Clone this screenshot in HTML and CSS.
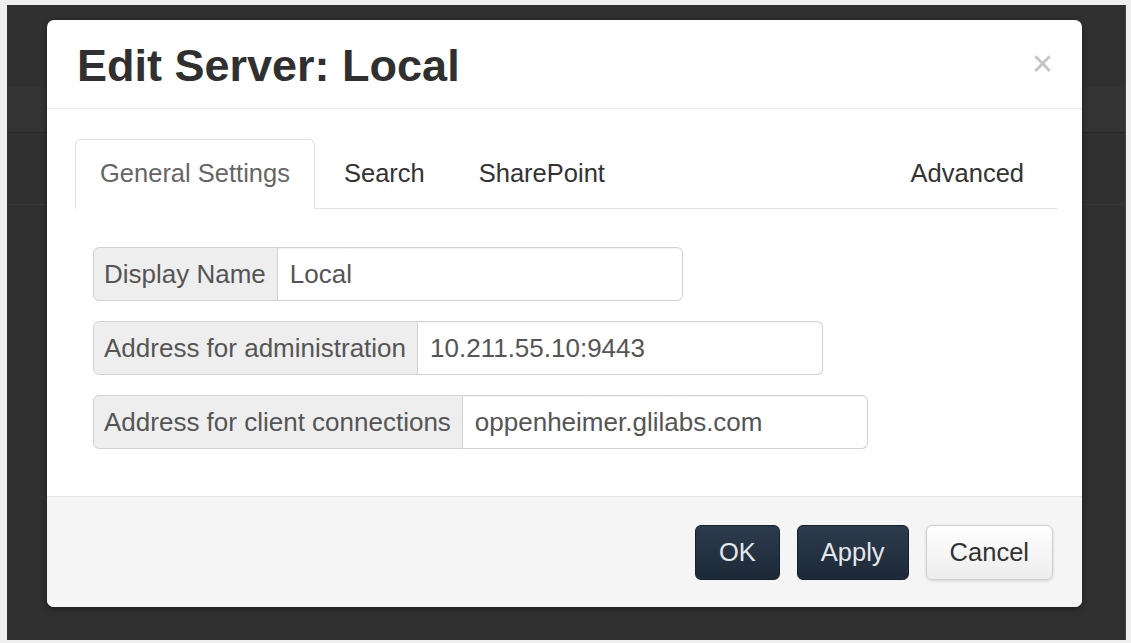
FILE: index.html
```html
<!DOCTYPE html>
<html lang="en">
<head>
<meta charset="utf-8">
<title>Edit Server: Local</title>
<link rel="stylesheet" href="styles.css">
</head>
<body>
<div class="backdrop">
  <div class="modal">
    <div class="modal-header">
      <h1 class="modal-title">Edit Server: Local</h1>
      <span class="close">&times;</span>
    </div>
    <div class="modal-body">
      <ul class="tabs">
        <li class="tab active">General Settings</li>
        <li class="tab">Search</li>
        <li class="tab">SharePoint</li>
        <li class="tab tab-right">Advanced</li>
      </ul>
      <div class="form">
        <div class="input-group">
          <span class="addon">Display Name</span>
          <div class="field">Local</div>
        </div>
        <div class="input-group">
          <span class="addon">Address for administration</span>
          <div class="field">10.211.55.10:9443</div>
        </div>
        <div class="input-group">
          <span class="addon">Address for client connections</span>
          <div class="field">oppenheimer.glilabs.com</div>
        </div>
      </div>
    </div>
    <div class="modal-footer">
      <button class="btn btn-dark">OK</button>
      <button class="btn btn-dark">Apply</button>
      <button class="btn btn-light">Cancel</button>
    </div>
  </div>
</div>
</body>
</html>
```

FILE: styles.css
```css
html, body {
  margin: 0;
  padding: 0;
}

body {
  background: #efefef;
  font-family: "Liberation Sans", Arial, Helvetica, sans-serif;
  width: 1131px;
  height: 643px;
  overflow: hidden;
}

.backdrop {
  margin: 5px 5px 0 7px;
  height: 635px;
  box-sizing: border-box;
  padding: 15px 0 0 40px;
  background-color: #303030;
  background-image: linear-gradient(to bottom,
      transparent 82px, #333333 82px, #333333 127px,
      #272727 127px, #272727 128px, transparent 128px,
      transparent 199px, #373737 199px, #373737 200px, transparent 200px);
  border-right: 1px solid #444;
}

.modal {
  width: 1035px;
  height: 587px;
  background: #fff;
  border-radius: 7px;
  overflow: hidden;
  box-shadow: 0 2px 6px rgba(0, 0, 0, 0.4);
}

.modal-header {
  height: 88px;
  border-bottom: 1px solid #e8e8e8;
  display: flex;
  align-items: center;
  justify-content: space-between;
  padding: 0 29px 0 30px;
}

.modal-title {
  margin: 0;
  font-size: 45px;
  font-weight: bold;
  color: #303030;
  line-height: 1;
  padding-top: 2px;
}

.close {
  font-size: 36px;
  line-height: 1;
  color: #c4c4c4;
  font-weight: normal;
}

.modal-body {
  padding: 30px 25px 47px 28px;
}

.tabs {
  list-style: none;
  margin: 0;
  padding: 0;
  display: flex;
  border-bottom: 1px solid #e2e2e2;
  height: 69px;
}

.tab {
  font-size: 25.5px;
  line-height: 35px;
  padding: 16px 24px;
  border: 1px solid transparent;
  border-radius: 6px 6px 0 0;
  margin-right: 4px;
  margin-bottom: -1px;
  color: #333;
}

.tab.active {
  color: #666;
  background: #fff;
  border-color: #e0e0e0;
  border-bottom-color: #fff;
}

.tab-right {
  margin-left: auto;
  margin-right: 8px;
}

.form {
  margin-top: 38px;
  padding-left: 18px;
  display: flex;
  flex-direction: column;
  gap: 20px;
}

.input-group {
  display: flex;
  height: 54px;
}

.addon {
  background: #eeeeee;
  border: 1px solid #d2d2d2;
  border-radius: 6px 0 0 6px;
  padding: 0 11px 0 10px;
  font-size: 26px;
  line-height: 52px;
  color: #555;
  white-space: nowrap;
}

.field {
  width: 405px;
  box-sizing: border-box;
  border: 1px solid #d2d2d2;
  border-left: none;
  border-radius: 0 6px 6px 0;
  padding: 0 12px;
  font-size: 26px;
  line-height: 52px;
  color: #555;
  box-shadow: inset 0 1px 1px rgba(0, 0, 0, 0.05);
}

.modal-footer {
  height: 110px;
  border-top: 1px solid #e5e5e5;
  background: #f5f5f5;
  display: flex;
  align-items: center;
  justify-content: flex-end;
  padding: 0 29px;
  gap: 17px;
}

.btn {
  font-family: inherit;
  font-size: 25.5px;
  height: 55px;
  padding: 0 23px;
  border-radius: 6px;
  cursor: pointer;
}

.btn-dark {
  color: #e4e8ec;
  background: linear-gradient(to bottom, #2c3b4d, #1d2937);
  border: 1px solid #17212c;
}

.btn-light {
  color: #333;
  background: linear-gradient(to bottom, #ffffff, #ededed);
  border: 1px solid #cfcfcf;
  box-shadow: 0 1px 3px rgba(0, 0, 0, 0.15);
}
```
